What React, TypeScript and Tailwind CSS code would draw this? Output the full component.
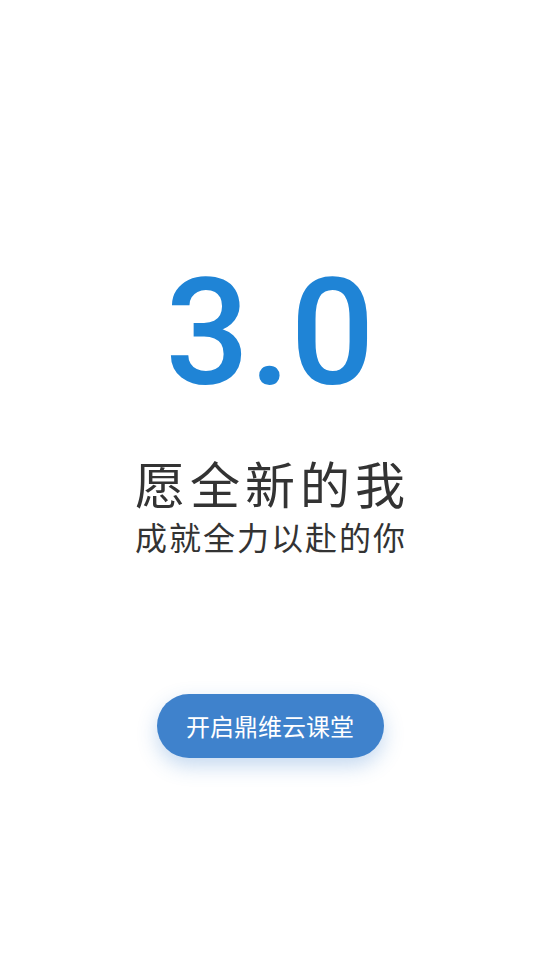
export default function App() {
  return (
    <div className="min-h-screen w-full bg-white flex flex-col items-center" style={{ fontFamily: '"Noto Sans CJK SC", "Noto Sans", sans-serif' }}>
      <div className="mt-[249px] text-[148px] leading-[170px] font-medium text-[#1f84d6] tracking-[0px]" style={{ fontFamily: 'Roboto, "Noto Sans", sans-serif' }}>
        3.0
      </div>
      <div className="mt-[33px] text-[50px] leading-[60px] text-[#333333] tracking-[5px] pl-[5px]">愿全新的我</div>
      <div className="mt-[3px] text-[32px] leading-[42px] text-[#333333] tracking-[2px] pl-[2px]">成就全力以赴的你</div>
      <button className="mt-[137px] w-[227px] h-[64px] rounded-full bg-[#3f82cc] text-white text-[24px] shadow-[0_8px_20px_rgba(63,130,204,0.3)]">
        开启鼎维云课堂
      </button>
    </div>
  );
}
